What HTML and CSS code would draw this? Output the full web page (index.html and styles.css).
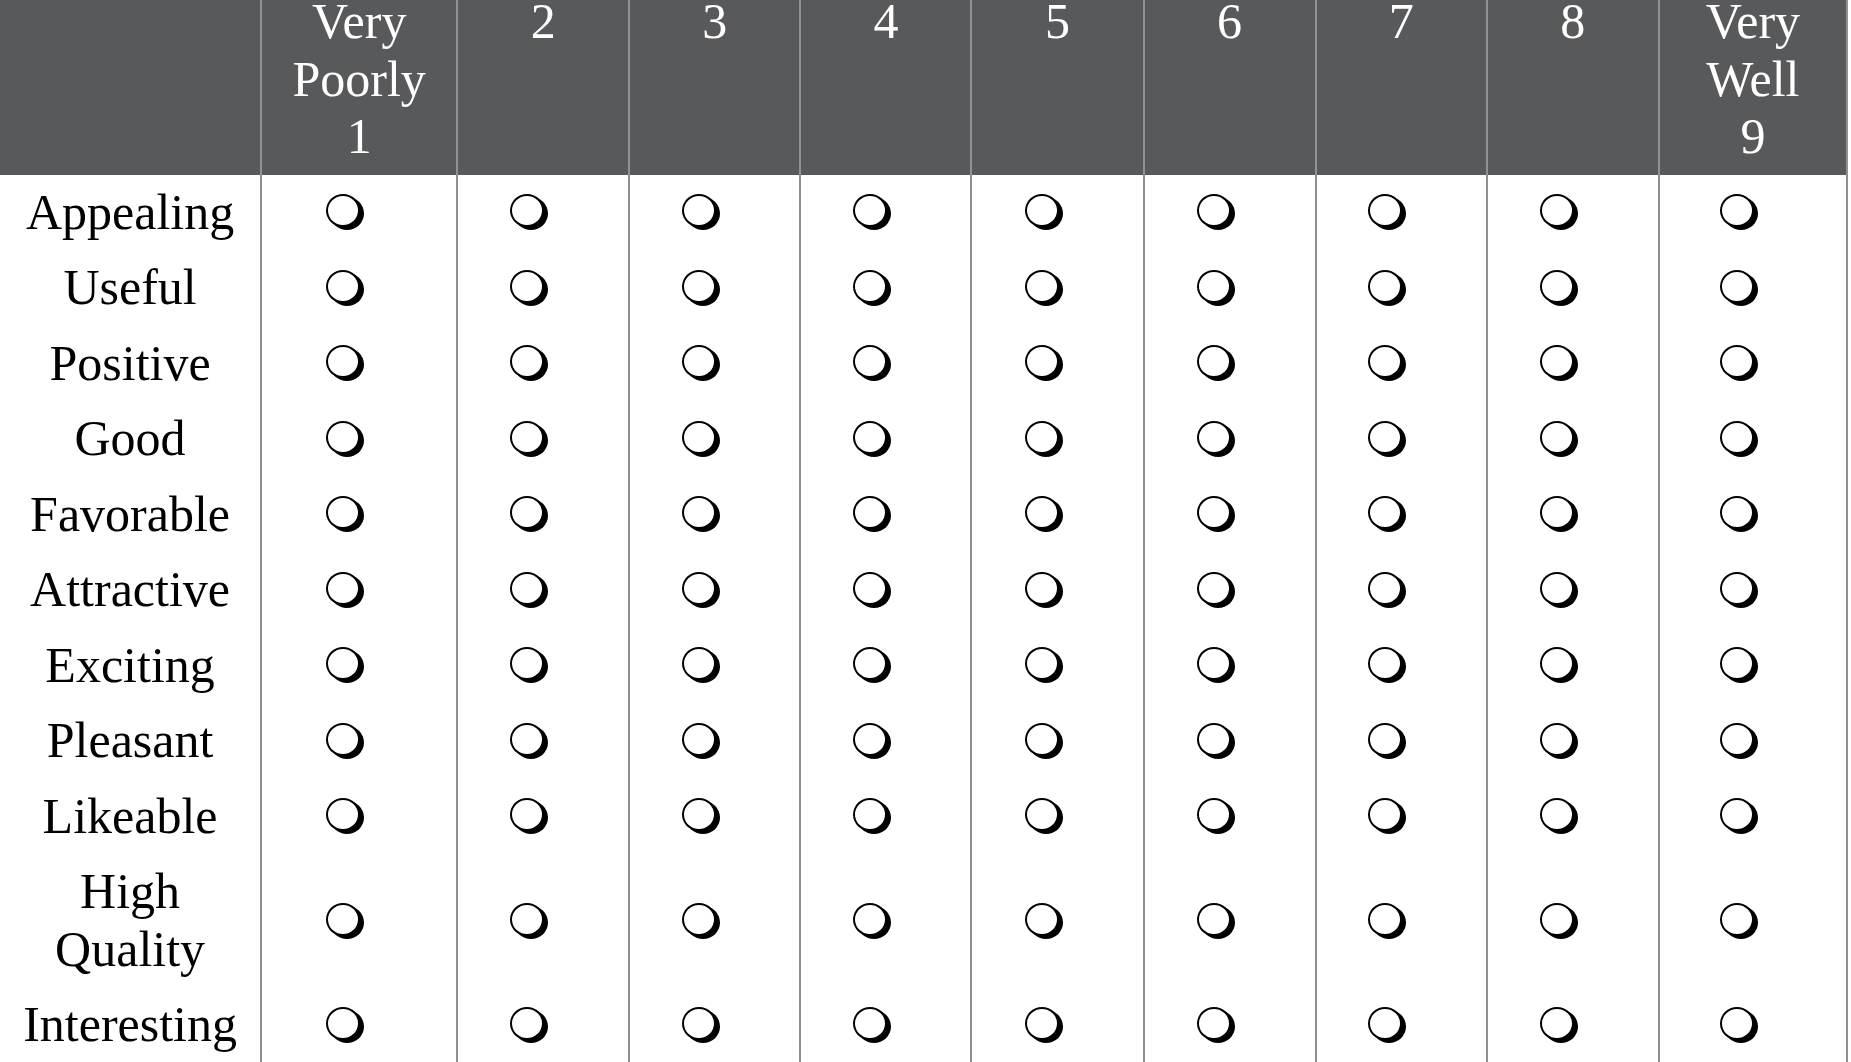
FILE: index.html
```html
<!DOCTYPE html>
<html>
<head>
<meta charset="utf-8">
<link rel="stylesheet" href="styles.css">
</head>
<body>
<table class="scale">
  <colgroup>
    <col class="c-label"><col class="c-first"><col class="c-mid"><col class="c-mid2"><col class="c-mid2"><col class="c-mid"><col class="c-mid"><col class="c-mid2"><col class="c-mid"><col class="c-last">
  </colgroup>
  <thead>
    <tr>
      <th></th>
      <th>Very<br>Poorly<br>1</th>
      <th>2</th>
      <th>3</th>
      <th>4</th>
      <th>5</th>
      <th>6</th>
      <th>7</th>
      <th>8</th>
      <th>Very<br>Well<br>9</th>
    </tr>
  </thead>
  <tbody id="rows">
  </tbody>
</table>
<script src="app.js"></script>
</body>
</html>
```

FILE: app.js
```js
var labels = ["Appealing", "Useful", "Positive", "Good", "Favorable", "Attractive", "Exciting", "Pleasant", "Likeable", "High<br>Quality", "Interesting"];
var body = document.getElementById("rows");
var html = "";
labels.forEach(function (l) {
  html += '<tr><td class="label">' + l + '</td>';
  for (var i = 0; i < 9; i++) {
    html += '<td class="opt"><div class="cell"><span class="radio"></span></div></td>';
  }
  html += '</tr>';
});
body.innerHTML = html;
```

FILE: styles.css
```css
html, body {
  margin: 0;
  padding: 0;
  background: #ffffff;
  overflow: hidden;
}

.scale {
  border-collapse: collapse;
  table-layout: fixed;
  width: 1848px;
  margin-top: -16px;
  font-family: "Liberation Serif", "Times New Roman", serif;
  font-size: 50px;
  line-height: 57.5px;
  color: #000;
}

.c-label { width: 261px; }
.c-first { width: 196px; }
.c-mid { width: 172px; }
.c-mid2 { width: 171px; }
.c-last { width: 188px; }

.scale th {
  background: #58595b;
  color: #ffffff;
  font-weight: normal;
  vertical-align: top;
  text-align: center;
  padding: 9px 0;
  border-left: 2px solid #929292;
  border-right: 2px solid #929292;
}

.scale th:first-child {
  border-left: none;
}

.scale td {
  padding: 9px 0;
  text-align: center;
  vertical-align: middle;
  border-left: 2px solid #8e8e8e;
  border-right: 2px solid #8e8e8e;
}

.scale td.label {
  border-left: none;
  white-space: nowrap;
}

.cell {
  height: 57.5px;
  display: flex;
  align-items: center;
  justify-content: center;
}

.radio {
  box-sizing: border-box;
  width: 34px;
  height: 33px;
  border: 2px solid #000;
  border-radius: 50%;
  background: #fff;
  box-shadow: 4px 3px 0 0 #000;
  margin-right: 32px;
  margin-bottom: 3px;
}
```
